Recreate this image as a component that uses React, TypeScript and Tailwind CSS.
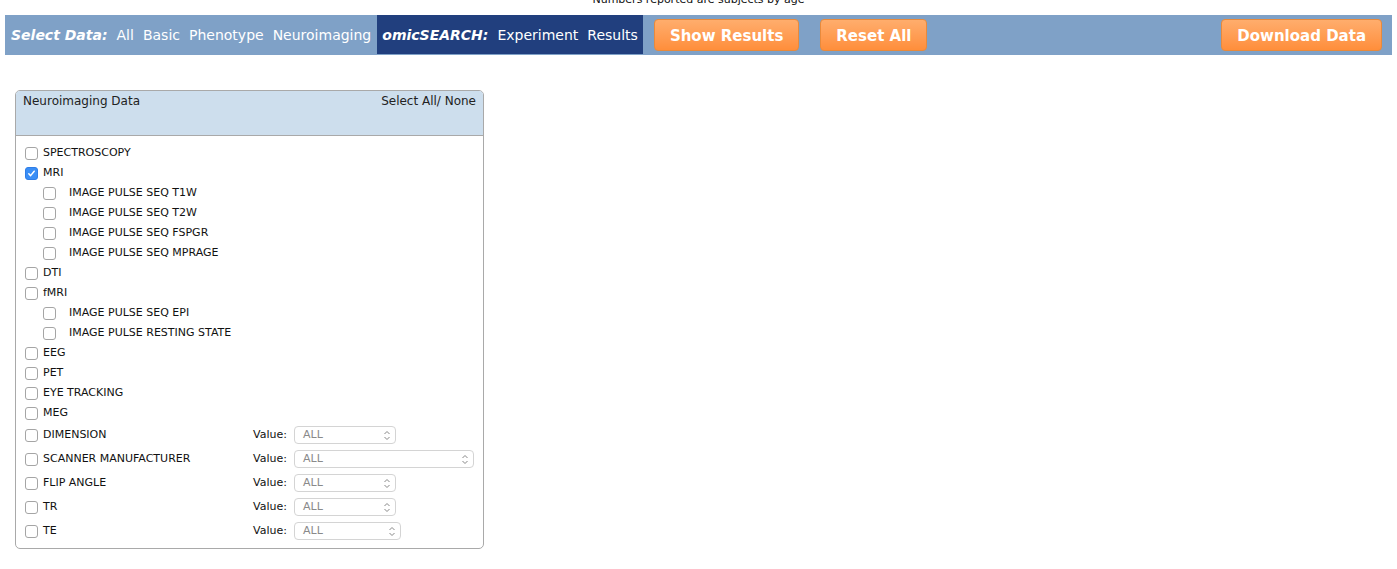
import { useState } from "react"

type Row = {
  id: string
  label: string
  sub?: boolean
  checked?: boolean
}

const rows: Row[] = [
  { id: "spec", label: "SPECTROSCOPY" },
  { id: "mri", label: "MRI", checked: true },
  { id: "t1w", label: "IMAGE PULSE SEQ T1W", sub: true },
  { id: "t2w", label: "IMAGE PULSE SEQ T2W", sub: true },
  { id: "fspgr", label: "IMAGE PULSE SEQ FSPGR", sub: true },
  { id: "mprage", label: "IMAGE PULSE SEQ MPRAGE", sub: true },
  { id: "dti", label: "DTI" },
  { id: "fmri", label: "fMRI" },
  { id: "epi", label: "IMAGE PULSE SEQ EPI", sub: true },
  { id: "rest", label: "IMAGE PULSE RESTING STATE", sub: true },
  { id: "eeg", label: "EEG" },
  { id: "pet", label: "PET" },
  { id: "eye", label: "EYE TRACKING" },
  { id: "meg", label: "MEG" },
]

const valueRows = [
  { id: "dim", label: "DIMENSION", w: "w-[102px]" },
  { id: "scan", label: "SCANNER MANUFACTURER", w: "w-[180px]" },
  { id: "flip", label: "FLIP ANGLE", w: "w-[102px]" },
  { id: "tr", label: "TR", w: "w-[102px]" },
  { id: "te", label: "TE", w: "w-[107px]" },
]

function Box({ on, onClick }: { on: boolean; onClick: () => void }) {
  if (on) {
    return (
      <span onClick={onClick} className="w-[13px] h-[13px] shrink-0 rounded-[3px] bg-[#3a8ef6] border border-[#2f7de6] flex items-center justify-center cursor-pointer">
        <svg width="9" height="9" viewBox="0 0 9 9">
          <path d="M1.8 4.8 L3.6 6.6 L7.2 2.2" stroke="white" strokeWidth="1.5" fill="none" strokeLinecap="round" strokeLinejoin="round" />
        </svg>
      </span>
    )
  }
  return <span onClick={onClick} className="w-[13px] h-[13px] shrink-0 rounded-[3px] bg-white border border-[#a5a5a5] cursor-pointer" />
}

function Orange({ children }: { children: React.ReactNode }) {
  return (
    <button className="h-[32px] px-[15px] pt-[2px] rounded-[4px] border border-[#e88a3c] bg-gradient-to-b from-[#ffad6c] to-[#ff8e3a] text-white font-bold text-[15px]">
      {children}
    </button>
  )
}

export default function App() {
  const [checked, setChecked] = useState<Record<string, boolean>>({ mri: true })

  function toggle(id: string) {
    setChecked({ ...checked, [id]: !checked[id] })
  }

  return (
    <div className="w-[1397px] h-[569px] bg-white font-['DejaVu_Sans',sans-serif] text-[#111]">
      <div className="h-[15px] overflow-hidden text-center">
        <p className="text-[11px] leading-[13px] -mt-[7px]">Numbers reported are subjects by age</p>
      </div>

      {/* nav bar */}
      <div className="mx-[5px] h-[40px] bg-[#7fa1c7] flex items-center text-white text-[14px] pr-[10px]">
        <div className="flex items-center gap-[9px] pl-[6px] h-full pt-[1px]">
          <span className="font-bold italic">Select Data:</span>
          <span>All</span>
          <span>Basic</span>
          <span>Phenotype</span>
          <span>Neuroimaging</span>
        </div>
        <div className="ml-[6px] h-[39px] self-start bg-[#213f7e] flex items-center gap-[9px] px-[5px] pt-[1px]">
          <span className="font-bold italic">omicSEARCH:</span>
          <span>Experiment</span>
          <span>Results</span>
        </div>
        <div className="ml-[11px] flex items-center gap-[21px]">
          <Orange>Show Results</Orange>
          <Orange>Reset All</Orange>
        </div>
        <div className="ml-auto">
          <Orange>Download Data</Orange>
        </div>
      </div>

      {/* panel */}
      <div className="mt-[35px] ml-[15px] w-[469px] border border-[#a9a9a9] rounded-[5px] overflow-hidden">
        <div className="h-[45px] bg-[#cddeed] border-b border-[#a9a9a9] flex justify-between px-[7px] pt-[1px] text-[12px] text-[#222]">
          <span>Neuroimaging Data</span>
          <span>Select All/ None</span>
        </div>
        <div className="pt-[7px] pb-[5px] text-[11px]">
          {rows.map((r) => (
            <div key={r.id} className={"h-[20px] flex items-center " + (r.sub ? "pl-[27px]" : "pl-[9px]")}>
              <Box on={!!checked[r.id]} onClick={() => toggle(r.id)} />
              <span className={r.sub ? "ml-[13px]" : "ml-[5px]"}>{r.label}</span>
            </div>
          ))}
          <div>
            {valueRows.map((r) => (
              <div key={r.id} className="h-[24px] flex items-center pl-[9px]">
                <Box on={!!checked[r.id]} onClick={() => toggle(r.id)} />
                <span className="ml-[5px] w-[210px]">{r.label}</span>
                <span className="w-[41px]">Value:</span>
                <div className={r.w + " h-[18px] border border-[#d4d4d4] rounded-[4px] flex items-center justify-between pl-[8px] pr-[4px] text-[#8a8a8a] bg-white"}>
                  <span>ALL</span>
                  <svg width="8" height="11" viewBox="0 0 8 11">
                    <path d="M1.5 4 L4 1.5 L6.5 4 M1.5 7 L4 9.5 L6.5 7" stroke="#888" strokeWidth="1" fill="none" />
                  </svg>
                </div>
              </div>
            ))}
          </div>
        </div>
      </div>
    </div>
  )
}
